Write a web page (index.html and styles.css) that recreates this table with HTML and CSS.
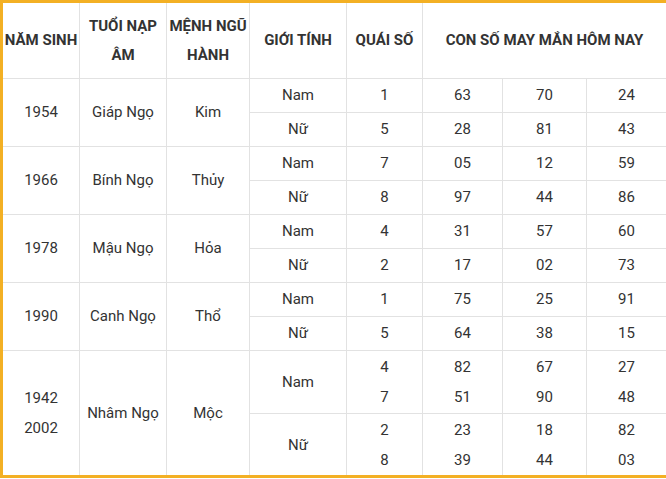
FILE: index.html
```html
<!DOCTYPE html>
<html>
<head>
<meta charset="utf-8">
<link rel="stylesheet" href="styles.css">
</head>
<body>
<table class="lucky">
  <colgroup>
    <col class="c1"><col class="c2"><col class="c3"><col class="c4"><col class="c5"><col class="c6"><col class="c7"><col class="c8">
  </colgroup>
  <thead>
    <tr class="head">
      <th class="nowrap">NĂM SINH</th>
      <th>TUỔI NẠP ÂM</th>
      <th>MỆNH NGŨ HÀNH</th>
      <th>GIỚI TÍNH</th>
      <th>QUÁI SỐ</th>
      <th colspan="3">CON SỐ MAY MẮN HÔM NAY</th>
    </tr>
  </thead>
  <tbody>
    <tr class="r1"><td rowspan="2">1954</td><td rowspan="2">Giáp Ngọ</td><td rowspan="2">Kim</td><td>Nam</td><td>1</td><td>63</td><td>70</td><td>24</td></tr>
    <tr class="r1"><td>Nữ</td><td>5</td><td>28</td><td>81</td><td>43</td></tr>
    <tr class="r1"><td rowspan="2">1966</td><td rowspan="2">Bính Ngọ</td><td rowspan="2">Thủy</td><td>Nam</td><td>7</td><td>05</td><td>12</td><td>59</td></tr>
    <tr class="r1"><td>Nữ</td><td>8</td><td>97</td><td>44</td><td>86</td></tr>
    <tr class="r1"><td rowspan="2">1978</td><td rowspan="2">Mậu Ngọ</td><td rowspan="2">Hỏa</td><td>Nam</td><td>4</td><td>31</td><td>57</td><td>60</td></tr>
    <tr class="r1"><td>Nữ</td><td>2</td><td>17</td><td>02</td><td>73</td></tr>
    <tr class="r1"><td rowspan="2">1990</td><td rowspan="2">Canh Ngọ</td><td rowspan="2">Thổ</td><td>Nam</td><td>1</td><td>75</td><td>25</td><td>91</td></tr>
    <tr class="r1"><td>Nữ</td><td>5</td><td>64</td><td>38</td><td>15</td></tr>
    <tr class="r2"><td rowspan="2">1942<br>2002</td><td rowspan="2">Nhâm Ngọ</td><td rowspan="2">Mộc</td><td>Nam</td><td>4<br>7</td><td>82<br>51</td><td>67<br>90</td><td>27<br>48</td></tr>
    <tr class="r2"><td>Nữ</td><td>2<br>8</td><td>23<br>39</td><td>18<br>44</td><td>82<br>03</td></tr>
  </tbody>
</table>
</body>
</html>
```
FILE: styles.css
```css
html, body {
  margin: 0;
  padding: 0;
  background: #ffffff;
}
.lucky {
  width: 666px;
  border-collapse: collapse;
  table-layout: fixed;
  border: 3px solid #f3b024;
  font-family: Roboto, "Liberation Sans", sans-serif;
  font-size: 15px;
  color: #333333;
}
.c1 { width: 78px; }
.c2 { width: 87px; }
.c3 { width: 83px; }
.c4 { width: 97px; }
.c5 { width: 76px; }
.c6 { width: 80px; }
.c7 { width: 84px; }
.c8 { width: 81px; }
.lucky th, .lucky td {
  border: 1px solid #e2e2e2;
  text-align: center;
  vertical-align: middle;
  padding: 0 2px;
  line-height: 29px;
}
.lucky th {
  font-weight: 700;
}
.lucky th.nowrap {
  white-space: nowrap;
  padding: 0;
}
.head { height: 77px; }
.r1 { height: 34px; }
.r2 { height: 63px; }
.r2 td { line-height: 30px; }
```
